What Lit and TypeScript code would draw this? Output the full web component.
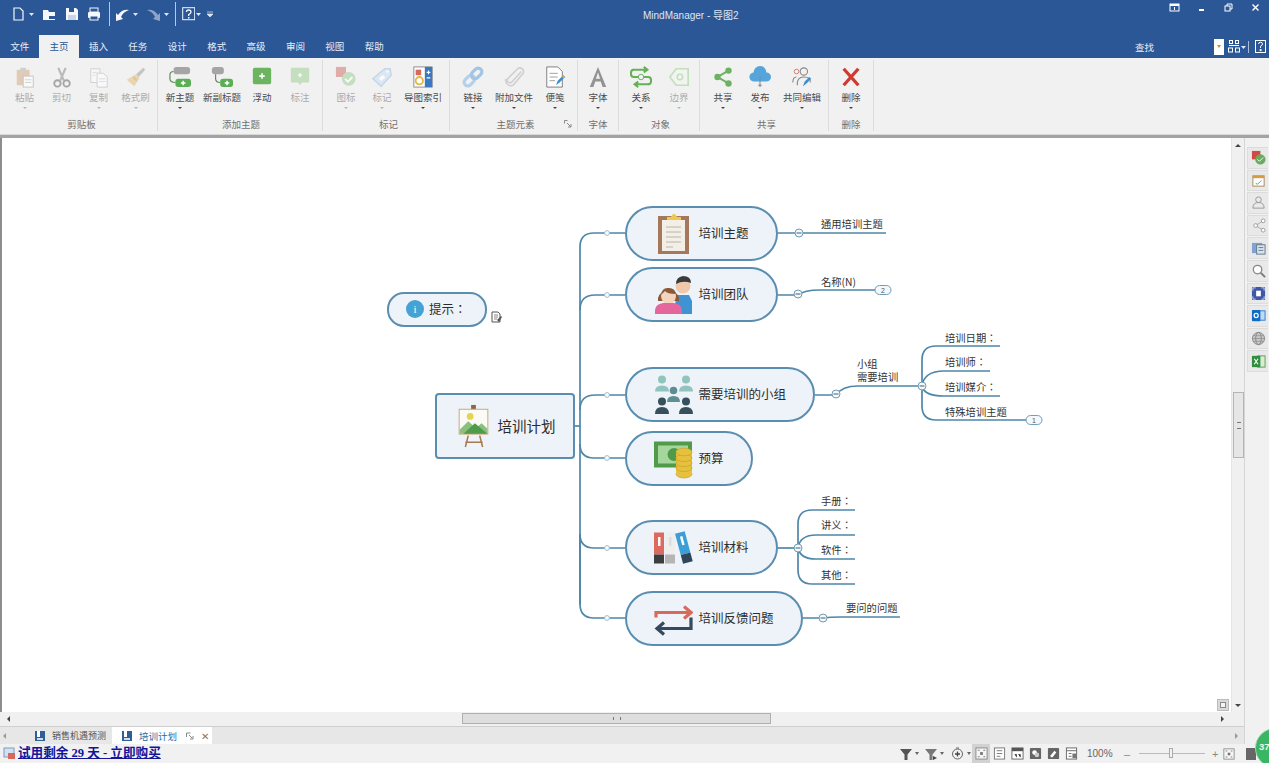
import { LitElement, html, css, svg } from "lit";
import { customElement } from "lit/decorators.js";

const icon = (body: unknown, w = 24, h = 24, vw = 24, vh = 24) =>
  html`<svg width=${w} height=${h} viewBox="0 0 ${vw} ${vh}">${body}</svg>`;

const rIcons: Record<string, unknown> = {
  paste: svg`<rect x="3" y="4" width="14" height="17" rx="1" fill="#d9b48f"/><rect x="7" y="2" width="6" height="4" fill="#bbb"/><rect x="10" y="11" width="11" height="12" fill="#fff" stroke="#aaa"/><path d="M12 15h7M12 18h7" stroke="#bbb"/>`,
  cut: svg`<path d="M8 2l6 14M16 2l-6 14" stroke="#999" stroke-width="2.4"/><circle cx="7" cy="19" r="3.5" fill="none" stroke="#777" stroke-width="2"/><circle cx="17" cy="19" r="3.5" fill="none" stroke="#777" stroke-width="2"/>`,
  copy: svg`<path d="M3 3h10v15H3z" fill="#fafafa" stroke="#bbb"/><path d="M10 8h7l4 4v11H10z" fill="#fff" stroke="#bbb"/><path d="M12 14h7M12 17h7M5 7h5M5 10h3" stroke="#ccc"/>`,
  brush: svg`<path d="M20 2l2 2-7 8-3-3z" fill="#aaa"/><path d="M12 9l4 4-6 9-8-7z" fill="#e3c48d"/><path d="M9 12l4 4" stroke="#c9a96b" stroke-width="2"/>`,
  newTopic: svg`<rect x="5" y="1" width="18" height="8" rx="3" fill="#a5a5a5"/><rect x="7" y="14" width="17" height="9" rx="3" fill="#5cae56"/><path d="M5 6Q1 6 1 10v4q0 4 6 4" fill="none" stroke="#5c8f5a" stroke-width="1.3"/><path d="M13 18.500h5M15.500 16v5" stroke="#fff" stroke-width="1.600"/>`,
  newSub: svg`<rect x="1" y="1" width="13" height="8" rx="3" fill="#a5a5a5"/><rect x="10" y="14" width="14" height="9" rx="3" fill="#5cae56"/><path d="M5 9v5q0 4 5 4" fill="none" stroke="#5c8f5a" stroke-width="1.3"/><path d="M15 18.500h5M17.500 16v5" stroke="#fff" stroke-width="1.600"/>`,
  floating: svg`<rect x="2" y="2" width="20" height="18" rx="2" fill="#6cb45f"/><path d="M9 11h6M12 8v6" stroke="#fff" stroke-width="1.800"/>`,
  callout: svg`<path d="M3 2h18a1 1 0 011 1v14a1 1 0 01-1 1h-7l-2 3-2-3H3a1 1 0 01-1-1V3a1 1 0 011-1z" fill="#a9d3a2"/><path d="M9.500 10h5M12 7.500v5" stroke="#fff" stroke-width="1.500"/>`,
  mark: svg`<rect x="1" y="1" width="11" height="11" fill="#d7837c"/><circle cx="15" cy="14" r="7.500" fill="#a9d3a2"/><path d="M11 14l3 3 5-5" stroke="#fff" stroke-width="2" fill="none"/>`,
  tag: svg`<path d="M15 3l6 0 1 7L11 22 2 14z" fill="#cfe1f2" stroke="#a9c6e3" stroke-width="1.500"/><rect x="9" y="11" width="6" height="4" transform="rotate(-42 12 13)" fill="#fff"/><circle cx="18" cy="6" r="1.500" fill="#fff"/>`,
  index: svg`<rect x="2" y="1" width="20" height="22" fill="#fff" stroke="#888"/><rect x="14" y="1" width="8" height="22" fill="#3b78c2"/><rect x="4" y="4" width="6" height="6" fill="#d9675c"/><circle cx="8" cy="16" r="4" fill="none" stroke="#e6b740" stroke-width="2"/><path d="M16 7h4M16 13h4M18 5v4" stroke="#fff" stroke-width="1.200"/>`,
  link: svg`<g transform="rotate(-45 12 12)" fill="none" stroke="#b4d0ea" stroke-width="3.500"><rect x="0" y="8" width="13" height="8" rx="4"/><rect x="11" y="8" width="13" height="8" rx="4" stroke="#a3c4e2"/></g>`,
  clip: svg`<path d="M19 5L8 17a3 3 0 01-4-4L15 2a4 4 0 016 5L10 20a6 6 0 01-8-7" fill="none" stroke="#cfcfcf" stroke-width="1.700" transform="translate(1 1)"/>`,
  note: svg`<path d="M3 1h12l5 5v17H3z" fill="#fff" stroke="#777"/><path d="M6 8h9M6 12h9M6 16h6" stroke="#999"/><path d="M13 21l2-5 6-6 2 2-6 6z" fill="#3a8fd0"/><path d="M20 11l2 2" stroke="#e6a33c" stroke-width="2"/>`,
  font: svg`<path d="M12 1L3 23h4l2-6h6l2 6h4z" fill="#939393"/><path d="M12 7l2.300 7H9.700z" fill="#f1f1f1"/>`,
  rel: svg`<path d="M3 4h15M15 1l4 3-4 3M21 20H6M9 17l-4 3 4 3" stroke="#66b058" stroke-width="2.200" fill="none"/><path d="M4 4Q1 4 1 8t3 4h16q3 0 3 4t-3 4" fill="none" stroke="#66b058" stroke-width="2.200"/><circle cx="12" cy="12" r="3" fill="#f1f1f1" stroke="#66b058"/>`,
  border: svg`<path d="M22 3v18H9l-7-9 7-9z" fill="#f1f6ef" stroke="#a9d3a2" stroke-width="1.800"/><circle cx="13" cy="12" r="3" fill="none" stroke="#a9d3a2" stroke-width="1.500"/>`,
  share: svg`<path d="M18 5L6 12l12 7" fill="none" stroke="#6db263" stroke-width="2.200"/><circle cx="18" cy="5" r="3.500" fill="#6db263"/><circle cx="6" cy="12" r="3.500" fill="#6db263"/><circle cx="18" cy="19" r="3.500" fill="#6db263"/>`,
  publish: svg`<path d="M6 17a5 5 0 01-1-10 7 7 0 0114 0 5 5 0 010 10z" fill="#55a5db"/><path d="M12 12v11M10 21h4" stroke="#7d8b99" stroke-width="1.200"/>`,
  coedit: svg`<circle cx="14" cy="6" r="4" fill="none" stroke="#888" stroke-width="1.200"/><circle cx="6" cy="6" r="2.500" fill="none" stroke="#c47a6f"/><path d="M7 21q-1-9 7-9t7 6M2 18q0-6 4-6" fill="none" stroke="#888" stroke-width="1.200"/><path d="M13 22l2-5 5-5 2 2-5 5z" fill="#3a8fd0"/>`,
  del: svg`<path d="M4 3l16 18M20 3L4 21" stroke="#cf3b2f" stroke-width="3.600"/>`,
};

type Btn = [string, string, number, boolean, boolean];
const groups: { title: string; w: number; pad: number; btns: Btn[]; launcher?: boolean }[] = [
  { title: "剪贴板", w: 158, pad: 6, btns: [["粘贴", "paste", 37, true, true], ["剪切", "cut", 37, true, false], ["复制", "copy", 37, true, true], ["格式刷", "brush", 37, true, true]] },
  { title: "添加主题", w: 165, pad: 2, btns: [["新主题", "newTopic", 40, false, true], ["新副标题", "newSub", 44, false, false], ["浮动", "floating", 36, false, false], ["标注", "callout", 40, true, false]] },
  { title: "标记", w: 127, pad: 5, btns: [["图标", "mark", 36, true, true], ["标记", "tag", 36, true, true], ["导图索引", "index", 46, false, true]] },
  { title: "主题元素", w: 128, pad: 4, launcher: true, btns: [["链接", "link", 38, false, true], ["附加文件", "clip", 44, false, true], ["便笺", "note", 38, false, true]] },
  { title: "字体", w: 41, pad: 0, btns: [["字体", "font", 40, false, true]] },
  { title: "对象", w: 81, pad: 3, btns: [["关系", "rel", 38, false, true], ["边界", "border", 38, true, true]] },
  { title: "共享", w: 129, pad: 5, btns: [["共享", "share", 36, false, true], ["发布", "publish", 38, false, true], ["共同编辑", "coedit", 46, false, true]] },
  { title: "删除", w: 45, pad: 0, btns: [["删除", "del", 44, false, true]] },
];

const nodeIcons: Record<string, unknown> = {
  clipboard: svg`<rect x="5" y="4" width="31" height="38" fill="#a5785c"/><rect x="9" y="8" width="23" height="31" fill="#f3efe6"/><path d="M13 15h15M13 20h15M13 25h15M13 30h15M13 35h7" stroke="#b9b4a8"/><path d="M14 8V5h4l2-3h2l2 3h4v3z" fill="#edc94f"/>`,
  team: svg`<circle cx="30" cy="13" r="7.500" fill="#f0c9ad"/><path d="M23 11q0-7 7-8 8 0 8 7-8-3-15 1z" fill="#3b3b3b"/><path d="M24 22h12l3 6v13H20z" fill="#3f93d2"/><path d="M5 25a11 12 0 0121 0v3H5z" fill="#8a5a3a"/><ellipse cx="15.500" cy="23" rx="7.500" ry="8" fill="#f4d4bd"/><path d="M8 22q1-8 8-7 6 0 7 6-9 0-11-3z" fill="#8a5a3a"/><path d="M2 41v-3q0-7 8-8h11q8 1 8 8v3z" fill="#e4669d"/>`,
  group: svg`<g fill="#91c4bf"><circle cx="9" cy="6.500" r="4"/><circle cx="33" cy="6.500" r="4"/><path d="M2 18.500q0-6 7-6t7 6z"/><path d="M26 18.500q0-6 7-6t7 6z"/></g><g fill="#5f8e92"><circle cx="20.500" cy="17.500" r="3.800"/><path d="M14 29q0-6 6.500-6t6.500 6z"/></g><g fill="#37505c"><circle cx="9" cy="28.500" r="4"/><circle cx="33" cy="28.500" r="4"/><path d="M2 41q0-7 7-7t7 7z"/><path d="M26 41q0-7 7-7t7 7z"/></g>`,
  money: svg`<rect x="1" y="4.500" width="38" height="26" fill="#4f9b49"/><rect x="5" y="8.500" width="30" height="18" fill="#a5d79c"/><circle cx="21" cy="17.500" r="6.500" fill="#4f9b49"/><g fill="#e6c13e" stroke="#caa22a" stroke-width=".7"><ellipse cx="31" cy="37" rx="8" ry="4"/><rect x="23" y="14" width="16" height="23" stroke="none"/><ellipse cx="31" cy="31" rx="8" ry="3.500"/><ellipse cx="31" cy="26" rx="8" ry="3.500"/><ellipse cx="31" cy="21" rx="8" ry="3.500"/><ellipse cx="31" cy="15" rx="8" ry="3.800"/></g>`,
  books: svg`<rect x="1" y="6.500" width="10" height="22" fill="#dd6a5e"/><rect x="1" y="28.500" width="10" height="9" fill="#3e3e3e"/><rect x="5" y="11" width="2.500" height="9" fill="#fff"/><rect x="12" y="6.500" width="10" height="22" fill="#eeeeee"/><rect x="12" y="28.500" width="10" height="9" fill="#b5b5b5"/><rect x="16" y="11" width="2.500" height="9" fill="#ddd"/><g transform="rotate(-15 31 22)"><rect x="26" y="6" width="10" height="22" fill="#3b9ed6"/><rect x="26" y="28" width="10" height="9" fill="#2f4658"/><rect x="30" y="10" width="2.500" height="9" fill="#fff"/></g>`,
  arrows: svg`<g fill="none" stroke-width="3.200"><path d="M3 20.500v-5h35M31 9.500l7 6-7 6" stroke="#d96a5b"/><path d="M38 20.500v11H4M11 25.500l-7 6 7 6" stroke="#334b5c"/></g>`,
  easel: svg`<path d="M13 33l-3 12M25 33l3 12M10 40h18" stroke="#a8794f" stroke-width="1.600" fill="none"/><rect x="16" y="1" width="5" height="5" fill="#8a6a45"/><rect x="3.500" y="5.500" width="30" height="26" fill="#fbfaf5" stroke="#c9a678"/><circle cx="15" cy="13" r="3.500" fill="#e5d44f"/><path d="M4 27l9-9 8 7 6-5 6 6v5H4z" fill="#88c07c"/><path d="M8 31l12-11 13 11z" fill="#4f9b49"/>`,
};

type NodeD = { x: number; y: number; w: number; h: number; t: string; ic: string };
const nodes: NodeD[] = [
  { x: 625, y: 206, w: 153, h: 55, t: "培训主题", ic: "clipboard" },
  { x: 625, y: 267, w: 153, h: 55, t: "培训团队", ic: "team" },
  { x: 625, y: 367, w: 190, h: 55, t: "需要培训的小组", ic: "group" },
  { x: 625, y: 431, w: 128, h: 55, t: "预算", ic: "money" },
  { x: 625, y: 520, w: 153, h: 55, t: "培训材料", ic: "books" },
  { x: 625, y: 591, w: 178, h: 55, t: "培训反馈问题", ic: "arrows" },
];
const labels: [number, number, string][] = [
  [821, 224, "通用培训主题"], [821, 282, "名称(N)"], [857, 364, "小组"], [857, 377, "需要培训"],
  [945, 338, "培训日期："], [945, 362, "培训师："], [945, 387, "培训媒介："], [945, 412, "特殊培训主题"],
  [821, 501, "手册："], [821, 525, "讲义："], [821, 550, "软件："], [821, 575, "其他："], [846, 608, "要问的问题"],
];
const links = [
  "M575 426H580", "M580 604V247Q580 233 594 233H625", "M580 310Q580 295 595 295H625", "M580 410Q580 395 595 395H625",
  "M580 444Q580 458 594 458H625", "M580 534Q580 548 594 548H625", "M580 534V604Q580 618 594 618H625",
  "M778 233H886", "M778 295H798Q804 290 820 290H877", "M815 395H836Q842 386 858 386H922",
  "M922 386V360Q922 346 936 346H1000", "M922 386Q924 371 944 371H990", "M922 386Q924 396 944 396H1000", "M922 386V406Q922 420 936 420H1027",
  "M778 548H798", "M798 548V524Q798 510 812 510H855", "M798 548Q800 535 816 535H855", "M798 548Q800 559 816 559H855", "M798 548V570Q798 584 812 584H855",
  "M803 618H824Q830 617 840 617H900",
];
const dots = [233, 295, 395, 458, 548, 618];
const minus: [number, number][] = [[799, 233], [798, 294], [836, 394], [922, 386], [798, 548], [823, 618]];
const pills: [number, number, string][] = [[883, 290, "2"], [1034, 420, "1"]];

const sideIcons: unknown[] = [
  svg`<rect x="1" y="1" width="9" height="9" fill="#cf4b44"/><circle cx="10" cy="10" r="5.500" fill="#67ad5b"/><path d="M7 10l2 2 4-4" stroke="#fff" fill="none"/>`,
  svg`<rect x="2" y="3" width="12" height="11" fill="#fff" stroke="#a48a5c"/><rect x="2" y="3" width="12" height="2.500" fill="#d99a3c"/><path d="M5 11l2 1 4-4" stroke="#5aa650" fill="none"/>`,
  svg`<circle cx="8" cy="5" r="3" fill="none" stroke="#999"/><path d="M2 14q0-6 6-6t6 6z" fill="none" stroke="#999"/>`,
  svg`<path d="M13 3L5 8l8 5" fill="none" stroke="#aaa"/><circle cx="13" cy="3" r="2" fill="#fff" stroke="#999"/><circle cx="5" cy="8" r="2" fill="#fff" stroke="#999"/><circle cx="13" cy="13" r="2" fill="#fff" stroke="#999"/>`,
  svg`<rect x="1" y="2" width="11" height="11" fill="#7fa4cf"/><rect x="6" y="4" width="9" height="10" fill="#d5e2ef" stroke="#678"/><path d="M8 7h5M8 10h5" stroke="#678"/>`,
  svg`<circle cx="7" cy="7" r="4.500" fill="#fff" stroke="#888" stroke-width="1.400"/><path d="M10.500 10.500L15 15" stroke="#777" stroke-width="2"/>`,
  svg`<rect x="1" y="1" width="14" height="14" rx="1" fill="#3e57a8"/><rect x="5.500" y="5" width="5" height="6" fill="#fff"/><path d="M2 5V2h3M14 5V2h-3M2 11v3h3M14 11v3h-3" stroke="#c7d2ee" fill="none"/>`,
  svg`<rect x="7" y="3" width="8" height="10" fill="#bcdcf5" stroke="#2b7cd3"/><rect x="1" y="2" width="9" height="12" rx="1" fill="#0f6cc4"/><circle cx="5.500" cy="8" r="2.200" fill="none" stroke="#fff" stroke-width="1.300"/>`,
  svg`<circle cx="8" cy="8" r="6.500" fill="#c9c9c9" stroke="#888"/><ellipse cx="8" cy="8" rx="3" ry="6.500" fill="none" stroke="#888"/><path d="M1.500 8h13M2.500 5h11M2.500 11h11" stroke="#888" stroke-width=".7"/>`,
  svg`<rect x="7" y="2" width="8" height="12" fill="#d9ecd2" stroke="#5c9e4c"/><rect x="1" y="2" width="9" height="12" fill="#2f8f3e"/><path d="M3.500 5l4 6M7.500 5l-4 6" stroke="#fff" stroke-width="1.200"/>`,
];

const viewIcons: unknown[] = [
  svg`<rect x="1" y="1" width="12" height="12" fill="#f5f5f5" stroke="#888"/><path d="M3 3.500h2M9 3.500h2M3 10.500h2M9 10.500h2" stroke="#777"/><rect x="5.500" y="5.500" width="3" height="3" fill="#777"/>`,
  svg`<rect x="1.500" y="1" width="11" height="12" fill="#fff" stroke="#777"/><path d="M4 4h6M4 7h6M4 10h4" stroke="#777"/>`,
  svg`<rect x="1" y="1" width="12" height="12" fill="#fff" stroke="#666"/><rect x="1" y="1" width="12" height="3.500" fill="#555"/><path d="M4 8h2v3M8 8h2v3" stroke="#555"/>`,
  svg`<rect x="1" y="1" width="12" height="12" rx="1" fill="#666"/><circle cx="6" cy="6" r="2.500" fill="#fff"/><circle cx="8.500" cy="8.500" r="2.500" fill="#ccc"/>`,
  svg`<rect x="1" y="1" width="12" height="12" rx="1" fill="#666"/><path d="M4 9l4-5 2 2-4 5H4z" fill="#fff"/>`,
  svg`<rect x="1.500" y="1" width="11" height="12" fill="#fff" stroke="#666"/><path d="M1.500 4h11M4 7h3M4 10h3" stroke="#666"/><rect x="8" y="7" width="4" height="5" fill="#777"/>`,
];

const docIcon = svg`<rect x="1" y="1" width="10" height="10" fill="#2f5f95"/><rect x="3" y="1" width="3" height="6" fill="#fff"/><rect x="3" y="8" width="6" height="2" fill="#cfdcec"/>`;
const smallArrow = svg`<path d="M0 0h4L2 3z" fill="#666"/>`;

@customElement("app-root")
export class AppRoot extends LitElement {
  static styles = css`
    :host { display: flex; flex-direction: column; width: 1269px; height: 763px; overflow: hidden; position: relative;
      font-family: "Noto Sans CJK SC", "Liberation Sans", sans-serif; background: #f1f1f1; }
    svg { display: block; flex: none; }
    .title { height: 35px; background: #2b5797; display: flex; align-items: flex-start; color: #dfe7f2; flex: none; }
    .qat { width: 643px; flex: none; display: flex; align-items: center; height: 28px; padding-left: 12px; box-sizing: border-box; }
    .qat .sep { width: 1px; height: 24px; background: #b9c8de; flex: none; }
    .qg { flex: none; display: block; }
    .caption { font-size: 10px; line-height: 32px; font-family: "Liberation Sans", "Noto Sans CJK SC", sans-serif; }
    .winbtns { margin-left: auto; display: flex; padding: 2px 8px 0 0; gap: 16px; }
    .tabs { height: 23px; background: #2b5797; display: flex; align-items: stretch; flex: none; font-size: 9.500px; color: #e8eef6; }
    .tab { width: 39.400px; text-align: center; line-height: 23px; }
    .tab.on { background: #f1f1f1; color: #2b5797; }
    .find { margin-left: auto; display: flex; align-items: center; padding-right: 3px; }
    .find .f { margin-right: 60px; }
    .wbox { width: 10px; height: 16px; background: #fff; margin-right: 4px; display: flex; align-items: center; justify-content: center; }
    .vsep { width: 1px; height: 12px; background: #a9bcd6; margin: 0 6px 0 2px; }
    .wa { margin-left: 1px; }
    .ribbon { height: 77px; background: #f1f1f1; display: flex; flex: none; box-sizing: border-box; border-bottom: 1px solid #d8d8d8; }
    .grp { display: flex; flex-direction: column; box-sizing: border-box; border-right: 1px solid #dcdcdc; margin-top: 2px; margin-bottom: 3px; flex: none; position: relative; }
    .btns { display: flex; height: 58px; }
    .btn { display: flex; flex-direction: column; align-items: center; font-size: 9.500px; color: #4b4b4b; padding-top: 6px; box-sizing: border-box; white-space: nowrap; }
    .btn .lbl { margin-top: 2px; line-height: 14px; }
    .btn.off { color: #ababab; }
    .btn.off svg { opacity: .62; }
    .arr { width: 0; height: 0; border: 2px solid transparent; border-top: 2.500px solid #444; margin-top: 3px; }
    .btn.off .arr { border-top-color: #b5b5b5; }
    .gt { text-align: center; font-size: 9.500px; color: #707070; line-height: 14px; padding-top: 1px; }
    .launch { position: absolute; right: 5px; bottom: 3px; }
    .main { flex: 1; display: flex; min-height: 0; border-top: 3px solid #a3a3a3; }
    .left { flex: 1; display: flex; flex-direction: column; min-width: 0; }
    .row { flex: 1; display: flex; min-height: 0; border-left: 2px solid #8d8d8d; }
    .canvas { flex: 1; background: #fff; position: relative; overflow: hidden; }
    .map { position: absolute; left: -2px; top: -138px; width: 1269px; height: 763px; }
    .map > svg { position: absolute; left: 0; top: 0; }
    .node { position: absolute; box-sizing: border-box; background: #edf3f9; border: 2px solid #5a8eb0; border-radius: 28px; display: flex; align-items: center; font-size: 12.500px; color: #2c2c2c; white-space: nowrap; padding-bottom: 2px; }
    .node .slot { margin-left: 26px; margin-right: 5.500px; width: 40px; flex: none; margin-top: 2px; }
    .node.center { border-radius: 4px; font-size: 14.500px; }
    .node.center .slot { margin-left: 18px; margin-right: 5.500px; width: 37px; }
    .node.tip { border-radius: 17px; padding-left: 17px; font-size: 12.500px; font-family: "Noto Sans CJK TC", sans-serif; }
    .tipi { width: 18px; height: 18px; border-radius: 50%; background: #45a2d5; color: #fff; font: 11px/18px "Liberation Serif", serif; text-align: center; margin-right: 5px; }
    .lab { position: absolute; font-size: 10.300px; line-height: 14px; color: #333; white-space: nowrap; font-family: "Noto Sans CJK TC", "Liberation Sans", sans-serif; }
    .noteic { position: absolute; left: 491px; top: 311px; }
    .vbar { width: 13px; flex: none; background: #f0f0f0; position: relative; display: flex; flex-direction: column; align-items: center; justify-content: space-between; padding: 6px 0 5px; box-sizing: border-box; border-left: 1px solid #e4e4e4; }
    .vthumb { position: absolute; left: 1px; right: 0; top: 254px; height: 66px; background: #e6e6e6; border: 1px solid #b5b5b5; box-sizing: border-box; display: flex; align-items: center; justify-content: center; }
    .grip { width: 4px; height: 5px; border-top: 1px solid #777; border-bottom: 1px solid #777; position: relative; }
    .hgrip { width: 6px; height: 3px; border-left: 1px solid #777; border-right: 1px solid #777; }
    .tri-u { width: 0; height: 0; border: 3px solid transparent; border-bottom: 3.500px solid #444; border-top: 0; }
    .tri-d { width: 0; height: 0; border: 3px solid transparent; border-top: 3.500px solid #444; border-bottom: 0; }
    .tri-l { width: 0; height: 0; border: 3px solid transparent; border-right: 3.500px solid #444; border-left: 0; }
    .tri-r { width: 0; height: 0; border: 3px solid transparent; border-left: 3.500px solid #444; border-right: 0; }
    .tri-l.g { border-right-color: #999; }
    .tri-r.g { border-left-color: #999; }
    .corner { position: absolute; right: 2px; bottom: 1px; width: 12px; height: 12px; background: #d9d9d9; border: 1px solid #bbb; box-sizing: border-box; display: flex; align-items: center; justify-content: center; }
    .corner i { width: 6px; height: 6px; border: 1px solid #888; box-sizing: border-box; background: #f4f4f4; display: block; }
    .hbar { height: 14px; flex: none; background: #f0f0f0; position: relative; display: flex; align-items: center; justify-content: space-between; padding: 0 20px 0 7px; }
    .hthumb { position: absolute; left: 462px; width: 309px; top: 1px; height: 11px; background: #dedede; border: 1px solid #b0b0b0; box-sizing: border-box; display: flex; align-items: center; justify-content: center; }
    .side { width: 25px; flex: none; background: #f1f1f1; padding: 9px 0 0 2px; box-sizing: border-box; display: flex; flex-direction: column; gap: 1px; border-left: 1px solid #d5d5d5; }
    .st { width: 21px; height: 21.600px; background: #e9e9e9; border: 1px solid #dcdcdc; border-right: 0; box-sizing: border-box; display: flex; align-items: center; justify-content: center; }
    .doctabs { height: 18px; flex: none; background: #e7e7e7; border-top: 1px solid #cfcfcf; box-sizing: border-box; display: flex; align-items: center; font-size: 9.500px; color: #555; padding-left: 3px; position: relative; white-space: nowrap; }
    .dt { display: flex; align-items: center; height: 100%; box-sizing: border-box; flex: none; }
    .dt.a { margin-left: 28px; width: 73px; gap: 6px; font-size: 9px; }
    .dt.b { background: #fff; margin-left: 5px; padding-left: 9px; width: 100px; color: #2b6aa3; gap: 6px; }
    .dt.b .x { color: #777; font-size: 10px; }
    .dt.b .pin { margin-left: 3px; margin-right: 1px; }
    .dtr { margin-left: auto; margin-right: 6px; }
    .status { height: 19px; flex: none; background: #f1f1f1; display: flex; align-items: center; padding-left: 3px; position: relative; overflow: hidden; }
    .buy { font: bold 12.600px/19px "Liberation Serif", "Noto Sans CJK SC", serif; color: #14149a; text-decoration: underline; margin-left: 3px; white-space: nowrap; }
    .sright { margin-left: auto; display: flex; align-items: center; width: 369px; flex: none; box-sizing: border-box; }
    .sa { display: flex; justify-content: center; align-items: center; flex: none; width: 7px; margin-left: 1px; }
    .sgap { width: 18px; display: flex; justify-content: center; align-items: center; height: 19px; flex: none; }
    .sgap.on { background: #d2d2d2; }
    .f2 { margin-left: 5px; }
    .f3 { margin-left: 6px; }
    .pct { font: 10px "Liberation Sans", sans-serif; color: #666; margin: 0 12px 0 7px; flex: none; width: 25px; white-space: nowrap; }
    .pm { font: 11px "Liberation Sans", sans-serif; color: #888; width: 6px; flex: none; }
    .slider { width: 66px; height: 1px; background: #bbb; margin: 0 7px 0 9px; position: relative; flex: none; }
    .slider i { position: absolute; left: 30px; top: -5px; width: 4px; height: 10px; border: 1px solid #aaa; background: #f4f4f4; box-sizing: border-box; display: block; }
    .fit { margin-left: 2px; }
    .bar { width: 10px; height: 12px; background: #666; margin-left: 8px; flex: none; }
    .badge { position: absolute; left: 1255px; top: 728px; width: 40px; height: 40px; border-radius: 50%; background: #3ab564; border: 1px solid #9ed8ae; box-sizing: border-box; color: #e9f9ea; font: bold 9.500px/36px "Liberation Sans", sans-serif; padding-left: 3px; }
  `;

  private ar = html`<svg width="5" height="4" viewBox="0 0 5 4"><path d="M0 1h5L2.500 4z" fill="#dfe7f2"/></svg>`;

  private qat() {
    const w = "#f4f7fb";
    const gap = (n: number) => html`<span class="qg" style="width:${n}px"></span>`;
    return html`<div class="qat">
      ${icon(svg`<path d="M2 1h6l3 3v9H2z" fill="none" stroke="${w}" stroke-width="1.200"/>`, 13, 14, 13, 14)}${gap(4)}${this.ar}${gap(8)}
      ${icon(svg`<path d="M1 3h5l1 2h6v8H1z" fill="${w}"/><rect x="7" y="9" width="6" height="3" fill="#2b5797"/>`, 14, 14, 14, 14)}${gap(9)}
      ${icon(svg`<path d="M1 1h10l2 2v10H1z" fill="${w}"/><rect x="4" y="1" width="5" height="4" fill="#2b5797"/><rect x="3" y="8" width="8" height="5" fill="#c9d6e8"/>`, 14, 14, 14, 14)}${gap(8)}
      ${icon(svg`<rect x="3" y="1" width="8" height="4" fill="none" stroke="${w}"/><rect x="1" y="5" width="12" height="6" rx="1" fill="${w}"/><rect x="3" y="9" width="8" height="4" fill="#2b5797" stroke="${w}"/>`, 14, 14, 14, 14)}${gap(8)}
      <span class="sep"></span>${gap(4.5)}
      ${icon(svg`<path d="M1 14V6l2 2Q7 2 14 3 8 5 6 10l2 2z" fill="${w}"/>`, 15, 15, 15, 15)}${gap(3)}${this.ar}${gap(8)}
      ${icon(svg`<path d="M14 14V6l-2 2Q8 2 1 3q6 2 8 7l-2 2z" fill="#8da4c6"/>`, 15, 15, 15, 15)}${gap(3)}${this.ar}${gap(6.5)}
      <span class="sep"></span>${gap(5.5)}
      ${icon(svg`<rect x=".7" y=".7" width="12" height="12" fill="none" stroke="${w}"/><path d="M4.500 5q0-2 2.200-2T9 5q0 1.500-2.300 2.500V9" fill="none" stroke="${w}" stroke-width="1.300"/><rect x="6" y="10" width="1.500" height="1.500" fill="${w}"/>`, 13, 14, 13, 14)}${gap(1)}${this.ar}${gap(6.5)}
      <svg width="6" height="6" viewBox="0 0 6 6"><path d="M0 1h6M0 3h6L3 6z" stroke="#dfe7f2" stroke-width=".7" fill="#dfe7f2"/></svg>
    </div>`;
  }

  private ribbon() {
    return groups.map(g => html`<div class="grp" style="width:${g.w}px;padding-left:${g.pad}px">
      <div class="btns">
        ${g.btns.map(([t, ic, w, off, arr]) => html`<div class="btn ${off ? "off" : ""}" style="width:${w}px">
          ${icon(rIcons[ic], 22, 22)}
          <span class="lbl">${t}</span>
          ${arr ? html`<span class="arr"></span>` : ""}
        </div>`)}
      </div>
      <div class="gt">${g.title}</div>
      ${g.launcher ? html`<span class="launch">${icon(svg`<path d="M.5.5h3M.5.5v3M3 3l4 4M7 4v3H4" stroke="#888" fill="none"/>`, 8, 8, 8, 8)}</span>` : ""}
    </div>`);
  }

  private map() {
    return html`<div class="map">
      <svg width="1269" height="763" viewBox="0 0 1269 763">
        ${links.map(d => svg`<path d=${d} fill="none" stroke="#4f87a8" stroke-width="1.700"/>`)}
        ${dots.map(y => svg`<circle cx="607" cy=${y} r="2.400" fill="#fff" stroke="#9dbccf"/>`)}
        ${minus.map(([x, y]) => svg`<circle cx=${x} cy=${y} r="4" fill="#f4f8fb" stroke="#6f9cb6"/><path d="M${x - 2.500} ${y}h5" stroke="#44606f"/>`)}
        ${pills.map(([x, y, t]) => svg`<rect x=${x - 8} y=${y - 4.500} width="16" height="9" rx="4.500" fill="#f6f9fb" stroke="#6f9cb6"/><text x=${x} y=${y + 2.500} font-size="7" text-anchor="middle" fill="#555" font-family="Liberation Sans">${t}</text>`)}
      </svg>
      ${nodes.map(n => html`<div class="node" style="left:${n.x}px;top:${n.y}px;width:${n.w}px;height:${n.h}px">
        <span class="slot">${icon(nodeIcons[n.ic], 40, 44, 40, 44)}</span>${n.t}
      </div>`)}
      <div class="node center" style="left:435px;top:393px;width:140px;height:66px">
        <span class="slot">${icon(nodeIcons.easel, 37, 44, 37, 46)}</span>培训计划
      </div>
      <div class="node tip" style="left:387px;top:292px;width:100px;height:35px"><span class="tipi">i</span>提示：</div>
      <span class="noteic">${icon(svg`<path d="M1 1h6l2 2v8H1z" fill="#fff" stroke="#555"/><path d="M3 4h4M3 6h4M3 8h3" stroke="#888"/><path d="M6 9l4-4 1 1-3 5z" fill="#555"/>`, 11, 12, 11, 12)}</span>
      ${labels.map(([x, y, t]) => html`<div class="lab" style="left:${x}px;top:${y - 7}px">${t}</div>`)}
    </div>`;
  }

  render() {
    return html`
      <div class="title">
        ${this.qat()}
        <div class="caption">MindManager - 导图2</div>
        <div class="winbtns">
          ${icon(svg`<rect x="1" y="2" width="9" height="7" fill="none" stroke="#fff"/><rect x="1" y="2" width="9" height="2" fill="#fff"/><path d="M5.500 5v3" stroke="#fff"/>`, 11, 11, 11, 11)}
          ${icon(svg`<rect x="3" y="7" width="5" height="2" fill="#fff"/>`, 11, 11, 11, 11)}
          ${icon(svg`<rect x="2" y="4" width="5" height="5" fill="none" stroke="#fff"/><path d="M4 4V2h5v5H7" fill="none" stroke="#fff"/>`, 11, 11, 11, 11)}
          ${icon(svg`<path d="M2.500 2.500l6 6M8.500 2.500l-6 6" stroke="#fff" stroke-width="1.400"/>`, 11, 11, 11, 11)}
        </div>
      </div>
      <div class="tabs">
        ${["文件", "主页", "插入", "任务", "设计", "格式", "高级", "审阅", "视图", "帮助"].map((t, i) => html`<div class="tab ${i === 1 ? "on" : ""}">${t}</div>`)}
        <div class="find">
          <span class="f">查找</span>
          <span class="wbox">${icon(svg`<path d="M0 0h4L2 3z" fill="#c98f2f"/>`, 4, 3, 4, 3)}</span>
          ${icon(svg`<g fill="none" stroke="#fff"><rect x="1.500" y=".5" width="3" height="3"/><rect x="7.500" y=".5" width="3" height="3"/><rect x=".5" y="8" width="4" height="4"/><rect x="7.500" y="8" width="4" height="4"/><path d="M1 5.500h10"/></g>`, 12, 13, 12, 13)}
          <span class="wa">${this.ar}</span>
          <span class="vsep"></span>
          ${icon(svg`<rect x=".5" y=".5" width="10" height="12" fill="none" stroke="#fff"/><path d="M3.500 4q0-1.800 2-1.800T7.500 4q0 1.300-2 2.300V8M5 9.500h1.200v1.200H5z" fill="none" stroke="#fff"/>`, 11, 13, 11, 13)}
        </div>
      </div>
      <div class="ribbon">${this.ribbon()}</div>
      <div class="main">
        <div class="left">
          <div class="row">
            <div class="canvas">${this.map()}
              <div class="corner"><i></i></div>
            </div>
            <div class="vbar"><span class="tri-u"></span><span class="vthumb"><span class="grip"></span></span><span class="tri-d"></span></div>
          </div>
          <div class="hbar"><span class="tri-l"></span><span class="hthumb"><span class="hgrip"></span></span><span class="tri-r"></span></div>
          <div class="doctabs">
            <span class="tri-l g"></span>
            <div class="dt a">${icon(docIcon, 12, 12, 12, 12)}销售机遇预测</div>
            <div class="dt b">${icon(docIcon, 12, 12, 12, 12)}<span>培训计划</span>
              <span class="pin">${icon(svg`<path d="M.5 1h4M.5 1v4M3 3l3 3M7 4v3H4" stroke="#888" fill="none"/>`, 8, 8, 8, 8)}</span><span class="x">✕</span></div>
            <span class="tri-r g dtr"></span>
          </div>
        </div>
        <div class="side">
          ${sideIcons.map(s => html`<div class="st">${icon(s, 15, 15, 16, 16)}</div>`)}
        </div>
      </div>
      <div class="status">
        ${icon(svg`<rect x="1" y="1" width="10" height="9" fill="#cfe1f2" stroke="#7c9cbc"/><rect x="5" y="6" width="7" height="6" fill="#d9675c"/>`, 12, 13, 12, 13)}
        <span class="buy">试用剩余 29 天 - 立即购买</span>
        <div class="sright">
          ${icon(svg`<path d="M0 1h12L7.500 6.500V12h-3V6.500z" fill="#555"/>`, 12, 12, 12, 12)}
          <span class="sa">${icon(smallArrow, 4, 3, 4, 3)}</span>
          <span class="f2">${icon(svg`<path d="M0 1h12L7.500 6.500V12h-3V6.500z" fill="#777"/><path d="M8 8l4 2-4 2z" fill="#444"/>`, 12, 12, 12, 12)}</span>
          <span class="sa">${icon(smallArrow, 4, 3, 4, 3)}</span>
          <span class="f3">${icon(svg`<circle cx="6.500" cy="7" r="5" fill="none" stroke="#666"/><path d="M4 7h5M6.500 4.500v5" stroke="#444" stroke-width="1.300"/><path d="M5 1h3" stroke="#666"/>`, 13, 13, 13, 13)}</span>
          <span class="sa">${icon(smallArrow, 4, 3, 4, 3)}</span>
          ${viewIcons.map((v, i) => html`<span class="sgap ${i === 0 ? "on" : ""}">${icon(v, 13, 13, 14, 14)}</span>`)}
          <span class="pct">100%</span>
          <span class="pm">–</span><span class="slider"><i></i></span><span class="pm">+</span>
          <span class="sgap fit">${icon(viewIcons[0], 12, 12, 14, 14)}</span>
          <span class="bar"></span>
        </div>
      </div>
      <div class="badge">37</div>
    `;
  }
}
